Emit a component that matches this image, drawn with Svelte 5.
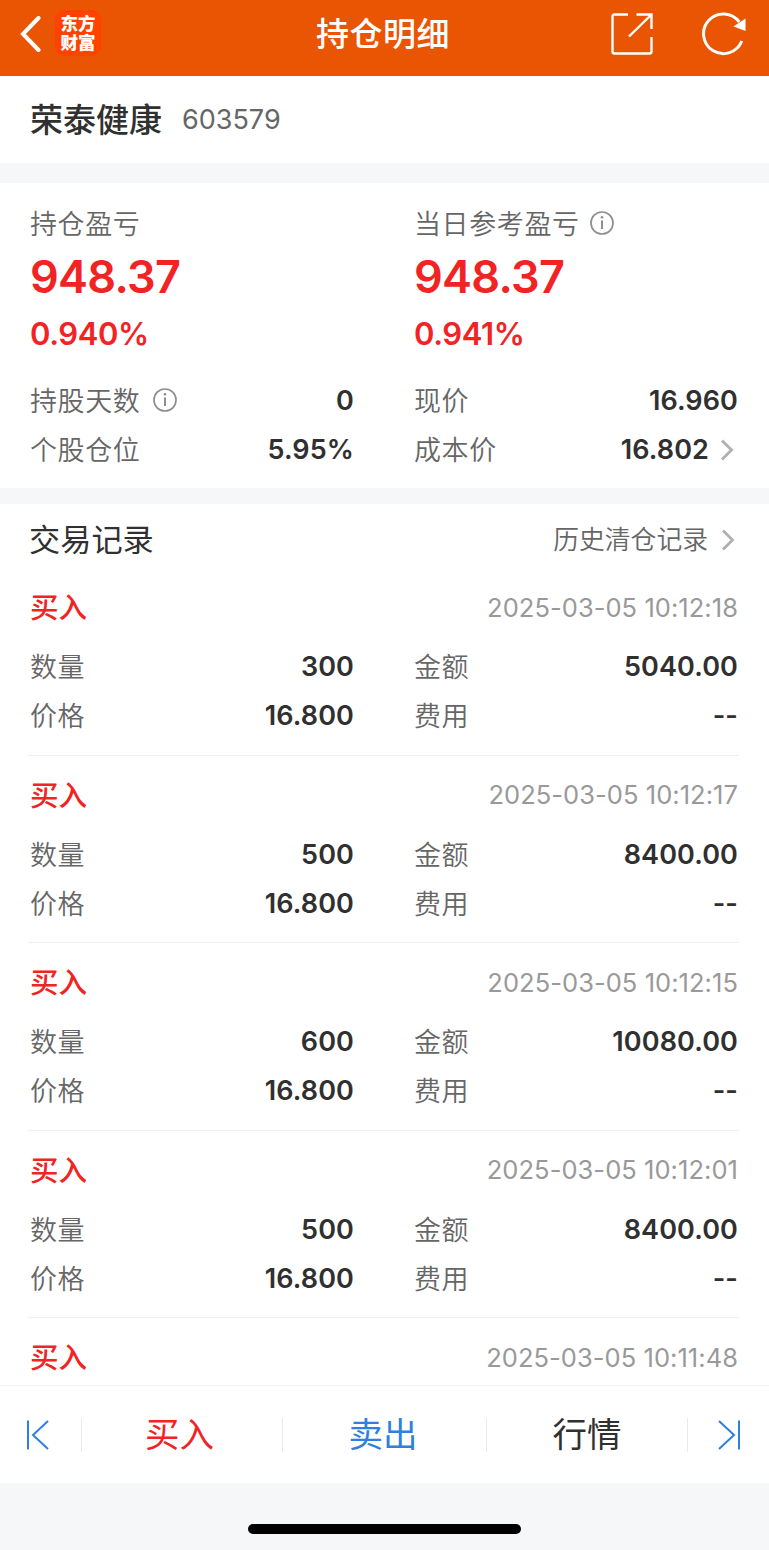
<script>
    const records = [
        { time: "2025-03-05 10:12:18", count: "300", amount: "5040.00" },
        { time: "2025-03-05 10:12:17", count: "500", amount: "8400.00" },
        { time: "2025-03-05 10:12:15", count: "600", amount: "10080.00" },
        { time: "2025-03-05 10:12:01", count: "500", amount: "8400.00" },
        { time: "2025-03-05 10:11:48" },
    ];
</script>

{#snippet info()}
    <svg class="info" width="24" height="24" viewBox="0 0 24 24" fill="none" stroke="#8e8e8e">
        <circle cx="12" cy="12" r="11" stroke-width="1.7" />
        <path d="M12 9.6V18" stroke-width="2" />
        <circle cx="12" cy="6.3" r="1.3" fill="#8e8e8e" stroke="none" />
    </svg>
{/snippet}

{#snippet arrow()}
    <svg class="arrow" width="14" height="22" viewBox="0 0 14 22" fill="none" stroke="#b0b0b0" stroke-width="2.8">
        <path d="M2 1.5L11.5 11L2 20.5" />
    </svg>
{/snippet}

{#snippet row(label, value)}
    <div class="row">
        <span class="label">{label}</span>
        <span class="value">{value}</span>
    </div>
{/snippet}

<div class="page">
    <header>
        <div class="side">
            <svg width="22" height="36" viewBox="0 0 22 36" fill="none" stroke="#fff" stroke-width="4">
                <path d="M18.5 2L3 18L18.5 34" stroke-linecap="round" />
            </svg>
            <div class="logo"><span>东方</span><span>财富</span></div>
        </div>
        <h1>持仓明细</h1>
        <div class="side right">
            <svg width="42" height="42" viewBox="0 0 42 42" fill="none" stroke="#fff" stroke-width="2.4">
                <path d="M17 1.5H3.5Q1.5 1.5 1.5 3.5V38.5Q1.5 40.5 3.5 40.5H38.5Q40.5 40.5 40.5 38.5V24" />
                <path d="M25.5 1.5H40.5V16M40 2L18 23.5" />
            </svg>
            <svg width="44" height="44" viewBox="0 0 44 44" fill="none" stroke="#fff" stroke-width="3">
                <path d="M39.8 29A19.8 19.8 0 1 1 37.3 10" />
                <path d="M43.5 6.5V19L31.5 14.5Z" fill="#fff" stroke="none" />
            </svg>
        </div>
    </header>

    <section class="stock">
        <h2>荣泰健康</h2>
        <span class="code">603579</span>
    </section>

    <section class="summary">
        <div class="cols">
            <div>
                <div class="label head">持仓盈亏</div>
                <div class="profit">948.37</div>
                <div class="percent">0.940%</div>
            </div>
            <div>
                <div class="label head">当日参考盈亏 {@render info()}</div>
                <div class="profit">948.37</div>
                <div class="percent">0.941%</div>
            </div>
        </div>
        <div class="cols rows">
            <div class="row">
                <span class="label wide">持股天数 {@render info()}</span>
                <span class="value">0</span>
            </div>
            {@render row("现价", "16.960")}
            {@render row("个股仓位", "5.95%")}
            <div class="row">
                <span class="label">成本价</span>
                <span class="value link">16.802 {@render arrow()}</span>
            </div>
        </div>
    </section>

    <section class="trades">
        <div class="trades-head">
            <h3>交易记录</h3>
            <span class="history">历史清仓记录 {@render arrow()}</span>
        </div>
        {#each records as record (record.time)}
            <article>
                <div class="record-head">
                    <span class="type">买入</span>
                    <time>{record.time}</time>
                </div>
                {#if record.count}
                    <div class="cols rows">
                        {@render row("数量", record.count)}
                        {@render row("金额", record.amount)}
                        {@render row("价格", "16.800")}
                        {@render row("费用", "--")}
                    </div>
                {/if}
            </article>
        {/each}
    </section>

    <nav>
        <button class="step">
            <svg width="24" height="30" viewBox="0 0 24 30" fill="none" stroke="#2f7fe0" stroke-width="2">
                <path d="M2 0.5V29.5M22 1L7 15L22 29" />
            </svg>
        </button>
        <button class="buy">买入</button>
        <button class="sell">卖出</button>
        <button class="quote">行情</button>
        <button class="step">
            <svg width="24" height="30" viewBox="0 0 24 30" fill="none" stroke="#2f7fe0" stroke-width="2">
                <path d="M22 0.5V29.5M2 1L17 15L2 29" />
            </svg>
        </button>
    </nav>
    <footer><div class="home"></div></footer>
</div>

<style>
    :global(body) {
        margin: 0;
        background: #fff;
    }
    .page {
        width: 769px;
        height: 1550px;
        display: flex;
        flex-direction: column;
        overflow: hidden;
        background: #fff;
        color: #303030;
        font-family: Inter, "Noto Sans CJK SC", sans-serif;
    }
    h1,
    h2,
    h3 {
        margin: 0;
        font-weight: 500;
    }
    svg {
        display: block;
        flex: none;
    }
    header {
        flex: none;
        box-sizing: border-box;
        height: 76px;
        padding: 0 23px 9px 20px;
        display: flex;
        align-items: center;
        background: #ea5504;
        color: #fff;
    }
    h1 {
        font-size: 33px;
        letter-spacing: 0.5px;
        line-height: 40px;
    }
    .side {
        flex: 1;
        display: flex;
        align-items: center;
        gap: 13px;
    }
    .right {
        justify-content: flex-end;
        gap: 49px;
    }
    .logo {
        width: 46px;
        height: 46px;
        margin-bottom: 1px;
        border-radius: 9px;
        background: #ff4200;
        display: flex;
        flex-direction: column;
        align-items: center;
        justify-content: center;
        font-size: 17.5px;
        font-weight: 900;
        line-height: 19px;
    }
    .stock {
        flex: none;
        height: 87px;
        padding: 0 30px;
        display: flex;
        align-items: center;
        gap: 20px;
        border-bottom: 20px solid #f6f7f9;
    }
    h2 {
        font-size: 33px;
        line-height: 40px;
    }
    .code {
        font-size: 27px;
        color: #666;
    }
    .summary {
        flex: none;
        box-sizing: border-box;
        height: 321px;
        padding: 20px 31px 0 30px;
        border-bottom: 16px solid #f6f7f9;
    }
    .cols {
        display: grid;
        grid-template-columns: 324px 324px;
        column-gap: 60px;
    }
    .label {
        display: flex;
        align-items: center;
        gap: 10px;
        padding-bottom: 2px;
        font-size: 27px;
        letter-spacing: 0.6px;
        font-weight: 350;
        color: #666;
    }
    .wide {
        gap: 13px;
    }
    .info {
        margin-top: 1px;
    }
    .head {
        height: 38px;
    }
    .profit {
        height: 68px;
        line-height: 68px;
        font-size: 45px;
        font-weight: 600;
        letter-spacing: -0.7px;
        color: #f12323;
    }
    .percent {
        height: 46px;
        line-height: 46px;
        font-size: 31px;
        font-weight: 600;
        letter-spacing: -0.4px;
        color: #f12323;
    }
    .rows {
        grid-auto-rows: 49px;
    }
    .summary .rows {
        margin-top: 19px;
    }
    .row {
        display: flex;
        align-items: center;
        justify-content: space-between;
    }
    .value {
        font-size: 27px;
        font-weight: 600;
        letter-spacing: 0.1px;
    }
    .link {
        display: flex;
        align-items: center;
        gap: 11px;
    }
    .arrow {
        margin-right: 4px;
    }
    .trades {
        flex: 1;
        min-height: 0;
        padding: 0 30px 0 28px;
    }
    .trades-head {
        height: 64px;
        box-sizing: border-box;
        padding: 7px 0 0 1px;
        display: flex;
        align-items: center;
        justify-content: space-between;
    }
    h3 {
        font-size: 31.2px;
        font-weight: 400;
        line-height: 40px;
    }
    .history {
        display: flex;
        align-items: center;
        gap: 13px;
        font-size: 25.8px;
        font-weight: 350;
        line-height: 36px;
        color: #666;
    }
    article {
        box-sizing: border-box;
        height: 187.6px;
        padding: 17px 0 0 2px;
        border-bottom: 1px solid #f0f0f0;
    }
    article:last-child {
        height: auto;
        border-bottom: 0;
    }
    .record-head {
        height: 44px;
        margin-bottom: 13px;
        display: flex;
        align-items: center;
        justify-content: space-between;
    }
    article:last-child .record-head {
        margin-bottom: 0;
    }
    .type {
        padding-top: 2px;
        font-size: 28.5px;
        font-weight: 500;
        line-height: 40px;
        color: #f12323;
    }
    time {
        margin-right: 1px;
        font-size: 25.5px;
        letter-spacing: 0.05px;
        color: #999;
    }
    nav {
        flex: none;
        box-sizing: border-box;
        height: 98px;
        display: grid;
        grid-template-columns: 82px 201px 204px 201px 81px;
        align-items: center;
        border-top: 1px solid #f4f4f4;
    }
    button {
        height: 34px;
        padding: 0;
        border: 0;
        border-right: 1px solid #eaeaea;
        background: none;
        display: flex;
        align-items: center;
        justify-content: center;
        font-family: inherit;
        font-size: 34.5px;
        line-height: 52px;
    }
    button:last-child {
        border-right: 0;
    }
    .step {
        padding: 0 6px 0 0;
    }
    .step:last-child {
        padding: 0;
    }
    .buy {
        padding-right: 5px;
        color: #f12323;
    }
    .sell {
        padding-right: 3px;
        color: #2f7fe0;
    }
    .quote {
        color: #303030;
    }
    footer {
        flex: none;
        height: 67px;
        display: flex;
        justify-content: center;
        align-items: center;
        background: #f6f7f9;
    }
    .home {
        width: 273px;
        height: 10px;
        margin-top: 24px;
        border-radius: 5px;
        background: #000;
    }
</style>
